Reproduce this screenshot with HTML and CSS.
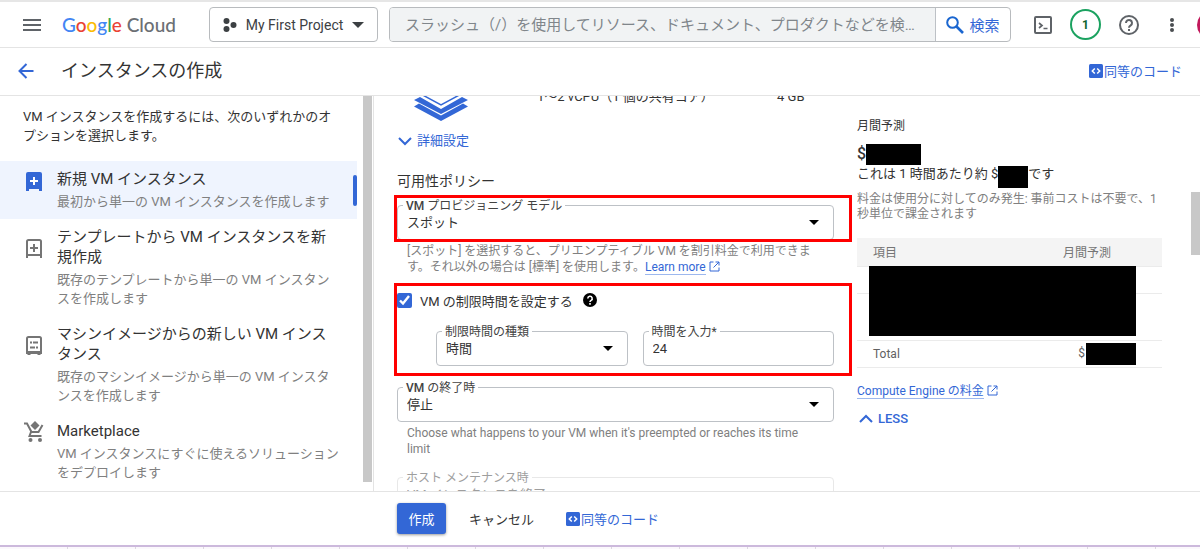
FILE: index.html
```html
<!DOCTYPE html>
<html lang="ja">
<head>
  <meta charset="UTF-8">
  <title>インスタンスの作成 – Google Cloud</title>
  <link rel="stylesheet" href="styles.css">
</head>
<body>
  <header class="topbar">
    <button class="icon-btn menu-btn" type="button" aria-label="メニュー">
      <svg width="18" height="12" viewBox="0 0 18 12"><path d="M0 0h18v2H0zM0 5h18v2H0zM0 10h18v2H0z" fill="#5f6368"/></svg>
    </button>
    <a class="logo" href="#"><span class="g-blue">G</span><span class="g-red">o</span><span class="g-yellow">o</span><span class="g-blue">g</span><span class="g-green">l</span><span class="g-red">e</span> Cloud</a>
    <button class="project-btn" type="button">
      <svg width="14" height="14" viewBox="0 0 14 14" fill="#3c4043"><circle cx="3.5" cy="3" r="3"/><circle cx="3.5" cy="11" r="3"/><circle cx="10.5" cy="7" r="3"/></svg>
      <span>My First Project</span>
      <svg width="12" height="6" viewBox="0 0 12 6"><path d="M0 0h12L6 6z" fill="#3c4043"/></svg>
    </button>
    <form class="search">
      <input type="text" aria-label="検索" placeholder="スラッシュ（/）を使用してリソース、ドキュメント、プロダクトなどを検…">
      <button type="button">
        <svg width="18" height="18" viewBox="0 0 18 18" fill="none" stroke="#1a66d0" stroke-width="2"><circle cx="6.500" cy="6.500" r="5.300"/><path d="M10.500 10.500l6.500 6.500" stroke-width="2.600"/></svg>
        検索
      </button>
    </form>
    <div class="tools">
      <button class="icon-btn" type="button" aria-label="Cloud Shell">
        <svg width="18" height="18" viewBox="0 0 18 18" fill="none" stroke="#5f6368" stroke-width="2"><rect x="1" y="1" width="16" height="16" rx="1"/><path d="M5 7l3 2.500L5 12M9.500 12.500h4" stroke-width="1.700"/></svg>
      </button>
      <button class="icon-btn notice" type="button">1</button>
      <button class="icon-btn" type="button" aria-label="ヘルプ">
        <svg width="20" height="20" viewBox="0 0 20 20" fill="none" stroke="#5f6368" stroke-width="2"><circle cx="10" cy="10" r="9"/><path d="M7 8a3 3 0 1 1 4.700 2.400c-1 .700-1.700 1.200-1.700 2.400M10 14v2"/></svg>
      </button>
      <button class="icon-btn" type="button" aria-label="その他">
        <svg width="4" height="14" viewBox="0 0 4 14" fill="#4a4d51"><circle cx="2" cy="2" r="2"/><circle cx="2" cy="7" r="2"/><circle cx="2" cy="12" r="2"/></svg>
      </button>
      <span class="avatar"></span>
    </div>
  </header>

  <div class="titlebar">
    <a class="back" href="#" aria-label="戻る">
      <svg width="16" height="16" viewBox="0 0 16 16" fill="none" stroke="#3367d6" stroke-width="2"><path d="M15.500 8H2M8.500 1L1.500 8l7 7"/></svg>
    </a>
    <h1>インスタンスの作成</h1>
    <a class="code-link" href="#">
      <svg width="14" height="14" viewBox="0 0 14 14"><rect width="14" height="14" rx="1.500" fill="#3367d6"/><path d="M5.800 4.500L3.300 7l2.500 2.500M8.200 4.500L10.700 7 8.200 9.500" fill="none" stroke="#fff" stroke-width="1.500"/></svg>同等のコード
    </a>
  </div>

  <main class="content">
    <nav class="sidebar">
      <p class="intro">VM インスタンスを作成するには、次のいずれかのオ<br>プションを選択します。</p>
      <a class="option selected" href="#">
        <svg width="16" height="19" viewBox="0 0 16 19"><path d="M2 0h12a2 2 0 0 1 2 2v17h-3v-2H3v2H0V2a2 2 0 0 1 2-2z" fill="#3367d6"/><path d="M8 5v8M4 9h8" stroke="#fff" stroke-width="2"/></svg>
        <span class="option-text">
          <span class="option-title">新規 VM インスタンス</span>
          <span class="option-desc">最初から単一の VM インスタンスを作成します</span>
        </span>
      </a>
      <a class="option" href="#">
        <svg width="16" height="19" viewBox="0 0 16 19" fill="none" stroke="#757575" stroke-width="2"><path d="M1 19V2.500Q1 1 2.500 1h11Q15 1 15 2.500V19M1 16h14M8 5v8M4 9h8"/></svg>
        <span class="option-text">
          <span class="option-title">テンプレートから VM インスタンスを新<br>規作成</span>
          <span class="option-desc">既存のテンプレートから単一の VM インスタン<br>スを作成します</span>
        </span>
      </a>
      <a class="option" href="#">
        <svg width="16" height="19" viewBox="0 0 16 19" fill="none" stroke="#757575" stroke-width="2"><path d="M1 16V2.500Q1 1 2.500 1h11Q15 1 15 2.500V16"/><path d="M0 16.500h16" stroke-width="3"/><path d="M1.500 18.500h3M11.500 18.500h3" stroke-width="1"/><path d="M4 6.500h2M7 6.500h5M4 11.500h5M10 11.500h2"/></svg>
        <span class="option-text">
          <span class="option-title">マシンイメージからの新しい VM インス<br>タンス</span>
          <span class="option-desc">既存のマシンイメージから単一の VM インスタ<br>ンスを作成します</span>
        </span>
      </a>
      <a class="option market" href="#">
        <svg width="20" height="21" viewBox="0 0 20 21" fill="#757575"><path d="M11 0l4.500 4.500L11 9 6.500 4.500z"/><path d="M0 2.500h3l4.500 8.500h7L18.500 4M7 11l-1.500 4h12" fill="none" stroke="#757575" stroke-width="2"/><circle cx="6.500" cy="19" r="2"/><circle cx="16" cy="19" r="2"/></svg>
        <span class="option-text">
          <span class="option-title">Marketplace</span>
          <span class="option-desc">VM インスタンスにすぐに使えるソリューション<br>をデプロイします</span>
        </span>
      </a>
    </nav>

    <form class="config">
      <div class="machine">
        <svg width="54" height="34" viewBox="0 0 54 34" fill="#3367d6"><path d="M5 6l22 12L49 6" fill="none" stroke="#3367d6" stroke-width="1.500"/><path d="M0 13l6-3 21 12 21-12 6 3-27 14z"/><path d="M0 19.500l5-3 22 12 22-12 5 3L27 34z"/></svg>
        <span class="vcpu">1～2 vCPU（1 個の共有コア）</span>
        <span>4 GB</span>
      </div>
      <button class="text-btn details" type="button">
        <svg width="14" height="9" viewBox="0 0 14 9" fill="none" stroke="#3367d6" stroke-width="2"><path d="M1 1l6 6 6-6"/></svg>
        詳細設定
      </button>

      <h2>可用性ポリシー</h2>
      <div class="marked marked-model">
        <div class="field">
          <label for="model"><b>VM</b> プロビジョニング モデル</label>
          <select id="model"><option>スポット</option></select>
        </div>
      </div>
      <p class="hint">[スポット] を選択すると、プリエンプティブル VM を割引料金で利用できま<br>す。それ以外の場合は [標準] を使用します。<a class="ext" href="#">Learn more</a> <svg class="ext-icon" width="11" height="11" viewBox="0 0 11 11"><path d="M4.500 1H1v9h9V6.500M6.500 1H10v3.500M10 1L4.500 6.500"/></svg></p>

      <div class="marked marked-limit">
        <div class="check-row">
          <input type="checkbox" id="limit" checked>
          <label for="limit">VM の制限時間を設定する</label>
          <svg width="14" height="14" viewBox="0 0 14 14"><circle cx="7" cy="7" r="7"/><path d="M4.800 5.500a2.200 2.200 0 1 1 3.300 1.900Q7 8 7 9M7 10v1.800" fill="none" stroke="#fff" stroke-width="1.600"/></svg>
        </div>
        <div class="pair">
          <div class="field">
            <label for="kind">制限時間の種類</label>
            <select id="kind"><option>時間</option></select>
          </div>
          <div class="field">
            <label for="hours">時間を入力*</label>
            <input type="text" id="hours" value="24">
          </div>
        </div>
      </div>

      <div class="field">
        <label for="end"><b>VM</b> の終了時</label>
        <select id="end"><option>停止</option></select>
      </div>
      <p class="hint">Choose what happens to your VM when it's preempted or reaches its time<br>limit</p>
      <div class="field disabled">
        <label for="host">ホスト メンテナンス時</label>
        <select id="host" disabled><option>VM インスタンスを終了</option></select>
      </div>
    </form>

    <aside class="estimate">
      <h3>月間予測</h3>
      <p class="price">$<span class="redacted"></span></p>
      <p class="hourly">これは 1 時間あたり約 $<span class="redacted"></span>です</p>
      <p class="note">料金は使用分に対してのみ発生: 事前コストは不要で、1<br>秒単位で課金されます</p>
      <div class="costs">
        <table>
          <thead>
            <tr><th>項目</th><th>月間予測</th></tr>
          </thead>
          <tbody>
            <tr><td></td><td></td></tr>
            <tr class="tall"><td></td><td></td></tr>
            <tr><td>Total</td><td class="sum">$<span class="redacted"></span></td></tr>
          </tbody>
        </table>
        <div class="cover"></div>
      </div>
      <p class="pricing"><a class="ext" href="#">Compute Engine の料金</a> <svg class="ext-icon" width="11" height="11" viewBox="0 0 11 11"><path d="M4.500 1H1v9h9V6.500M6.500 1H10v3.500M10 1L4.500 6.500"/></svg></p>
      <button class="text-btn less" type="button">
        <svg width="14" height="9" viewBox="0 0 14 9" fill="none" stroke="#3367d6" stroke-width="2"><path d="M1 8l6-6 6 6"/></svg>
        LESS
      </button>
    </aside>
  </main>

  <footer class="actions">
    <button class="primary" type="button">作成</button>
    <button class="cancel" type="button">キャンセル</button>
    <a class="code-link" href="#">
      <svg width="14" height="14" viewBox="0 0 14 14"><rect width="14" height="14" rx="1.500" fill="#3367d6"/><path d="M5.800 4.500L3.300 7l2.500 2.500M8.200 4.500L10.700 7 8.200 9.500" fill="none" stroke="#fff" stroke-width="1.500"/></svg>同等のコード
    </a>
  </footer>
  <div class="strip"></div>
</body>
</html>
```
FILE: styles.css
```css
* {
  box-sizing: border-box;
}

body {
  margin: 0;
  height: 100vh;
  display: flex;
  flex-direction: column;
  overflow: hidden;
  font-family: Roboto, "Noto Sans CJK JP", sans-serif;
  font-size: 13px;
  color: #333;
  background-color: #fff;
}

h1, h2, h3, p {
  margin: 0;
  font-weight: 400;
}

a {
  color: #3367d6;
  text-decoration: none;
}

button, input, select {
  font: inherit;
  color: inherit;
}

button {
  padding: 0;
  border: none;
  background: none;
  cursor: pointer;
}

svg {
  flex: none;
}

/* Header */
.topbar {
  flex: none;
  display: flex;
  align-items: center;
  height: 48px;
  padding-left: 23px;
  border-top: 2px solid #e6e6e6;
  border-bottom: 1px solid #e4e4e4;
}

.icon-btn {
  display: flex;
  align-items: center;
  justify-content: center;
}

.logo {
  width: 126px;
  margin: 0 21px;
  font-family: Lato, sans-serif;
  font-size: 19px;
  font-weight: 500;
  line-height: 24px;
  white-space: nowrap;
  color: #6b6f74;
}

.g-blue { color: #4285f4; }
.g-red { color: #ea4335; }
.g-yellow { color: #fbbc05; }
.g-green { color: #34a853; }

.project-btn {
  display: flex;
  align-items: center;
  width: 169px;
  height: 35px;
  padding: 0 13px;
  border: 1px solid #b8bbbe;
  border-radius: 4px;
  font-size: 14px;
  color: #3c4043;
}

.project-btn span {
  flex: 1;
  text-align: center;
}

.search {
  flex: 1;
  display: flex;
  height: 35px;
  margin: 0 23px 0 11px;
  border: 1px solid #b8bbbe;
  border-radius: 4px;
  overflow: hidden;
}

.search input {
  flex: 1;
  min-width: 0;
  padding: 0 15px;
  border: none;
  background-color: #f1f3f4;
  font-size: 15px;
}

.search input::placeholder {
  color: #80868b;
}

.search button {
  display: flex;
  align-items: center;
  justify-content: center;
  gap: 5px;
  width: 75px;
  border-left: 1px solid #bdc1c6;
  font-size: 15px;
  color: #3367d6;
}

.tools {
  flex: none;
  display: flex;
  align-items: center;
  width: 166px;
  gap: 18px;
  overflow: hidden;
}

.tools .icon-btn,
.avatar {
  flex: none;
}

.tools .icon-btn:nth-child(4) {
  margin-left: 13px;
}

.notice {
  width: 31px;
  height: 31px;
  border: 2px solid #1ba260;
  border-radius: 50%;
  font-size: 12px;
  font-weight: 700;
  color: #0d652d;
}

.avatar {
  margin-left: 5px;
  width: 28px;
  height: 28px;
  border-radius: 50%;
  background-color: #c2185b;
}

/* Page title */
.titlebar {
  flex: none;
  display: flex;
  align-items: center;
  height: 48px;
  padding: 0 18px 2px;
  border-bottom: 1px solid #e4e4e4;
}

.back {
  display: flex;
}

h1 {
  flex: 1;
  margin-left: 27px;
  font-size: 18px;
  line-height: 24px;
}

.code-link {
  display: flex;
  align-items: center;
  gap: 1px;
}

/* Three panes */
.content {
  flex: 1;
  min-height: 0;
  display: grid;
  grid-template-columns: 374px minmax(0, 1fr) 343px;
}

.sidebar,
.config,
.estimate {
  min-height: 0;
  overflow: hidden;
  position: relative;
}

.sidebar {
  padding-right: 16px;
  border-right: 1px solid #e4e4e4;
}

.sidebar::after {
  content: "";
  position: absolute;
  top: 0;
  right: 1px;
  bottom: 9px;
  width: 9px;
  background-color: #c8c8c8;
}

.intro {
  padding: 11px 0 0 23px;
  margin-bottom: 16px;
  line-height: 19px;
  white-space: nowrap;
}

.option {
  display: flex;
  gap: 15px;
  padding: 8px 0 8px 26px;
  position: relative;
  color: #333;
  white-space: nowrap;
}

.option > svg {
  margin-top: 3px;
}

.option + .option > svg {
  margin-top: 12px;
}

.option.selected {
  background-color: #eff4fe;
}

.option.selected::after {
  content: "";
  position: absolute;
  top: 14px;
  right: 0;
  bottom: 13px;
  width: 4px;
  border-radius: 2px;
  background-color: #3367d6;
}

.option.market {
  gap: 13px;
  padding-left: 24px;
}

.option + .option.market > svg {
  margin-top: 0;
}

.option-title,
.option-desc {
  display: block;
}

.option-title {
  font-size: 15px;
  line-height: 20px;
}

.option-desc {
  margin-top: 3px;
  line-height: 19px;
  color: #808080;
}

/* Form */
.config {
  padding: 0 23px;
}

.machine {
  display: flex;
  height: 34px;
  margin-top: -9px;
  padding-left: 17px;
  line-height: 20px;
}

.vcpu {
  width: 240px;
  margin-left: 69px;
}

.text-btn {
  display: flex;
  align-items: center;
  gap: 5px;
  line-height: 20px;
  color: #3367d6;
}

.details {
  margin-top: 10px;
  margin-left: 1px;
}

h2 {
  margin: 20px 0 14px;
  font-size: 14px;
  line-height: 20px;
}

.field {
  position: relative;
}

.field label {
  position: absolute;
  top: -8px;
  left: 6px;
  padding: 0 3px;
  background-color: #fff;
  font-size: 12px;
  line-height: 18px;
  color: #424242;
}

.field label b {
  font-weight: 500;
}

.field select,
.field input {
  appearance: none;
  display: block;
  width: 100%;
  height: 35px;
  padding: 0 9px;
  border: 1px solid #bdc1c6;
  border-radius: 4px;
  background-color: #fff;
}

.field:has(select)::after {
  content: "";
  position: absolute;
  top: 15px;
  right: 15px;
  border: 5px solid transparent;
  border-top-color: #000;
  border-bottom: none;
}

.field.disabled select {
  border-color: #e8e8e8;
  color: #9e9e9e;
  opacity: 1;
}

.field.disabled label {
  color: #9e9e9e;
}

.field.disabled::after {
  display: none;
}

.hint {
  margin: 3px 0 17px;
  padding-left: 10px;
  font-size: 12px;
  line-height: 16px;
  white-space: nowrap;
  color: #808080;
}

.field + .hint {
  margin-bottom: 20px;
}

.ext {
  border-bottom: 1px solid #9db8ee;
}

.ext-icon {
  vertical-align: -1px;
  fill: none;
  stroke: #3367d6;
}

/* Red frames round the settings to change */
.marked {
  position: relative;
}

.marked::after {
  content: "";
  position: absolute;
  border: 3px solid #f00;
  pointer-events: none;
}

.marked-model::after {
  inset: -10px -18px -2px -3px;
}

.marked-limit {
  margin-bottom: 21px;
}

.marked-limit::after {
  inset: -9px -18px -10px -3px;
}

.check-row {
  display: flex;
  align-items: center;
  height: 16px;
  margin-bottom: 23px;
}

.check-row input {
  width: 15px;
  height: 15px;
  margin: 0 8px 0 0;
  accent-color: #3367d6;
}

.check-row svg {
  margin-left: 10px;
}

.pair {
  display: grid;
  grid-template-columns: 1fr 1fr;
  gap: 15px;
  margin-left: 39px;
}

/* Price estimate */
.estimate {
  padding: 21px 38px 0 0;
}

.estimate::after {
  content: "";
  position: absolute;
  top: 96px;
  right: 0;
  width: 9px;
  height: 63px;
  background-color: #c8c8c8;
}

.redacted {
  display: inline-block;
  background-color: #000;
}

h3 {
  font-size: 12px;
  line-height: 18px;
}

.price,
.hourly {
  display: flex;
  white-space: pre;
}

.price {
  height: 21px;
  margin-top: 9px;
  font-size: 16px;
  font-weight: 500;
  line-height: 20px;
}

.price .redacted {
  width: 55px;
  height: 21px;
}

.hourly {
  height: 23px;
  line-height: 18px;
}

.hourly .redacted {
  width: 30px;
  height: 22px;
  margin-top: 1px;
}

.note {
  margin: 4px 0 16px;
  font-size: 12px;
  line-height: 15px;
  white-space: nowrap;
  color: #808080;
}

.costs {
  position: relative;
}

table {
  width: 100%;
  border-collapse: collapse;
  table-layout: fixed;
  font-size: 12px;
}

th, td {
  height: 27px;
  padding: 0 0 0 16px;
  border-bottom: 1px solid #ebebeb;
  text-align: left;
  color: #616161;
}

th {
  height: 28px;
  font-weight: 400;
  background-color: #f4f4f4;
  color: #757575;
}

th:last-child {
  width: 115px;
}

.tall td {
  height: 47px;
}

td.sum {
  padding: 0 26px 0 0;
  text-align: right;
}

.sum .redacted {
  width: 50px;
  height: 22px;
  margin-left: 1px;
  vertical-align: middle;
}

.cover {
  position: absolute;
  top: 28px;
  left: 12px;
  right: 26px;
  height: 70px;
  background-color: #000;
}

.pricing {
  margin-top: 15px;
  font-size: 12px;
  line-height: 16px;
}

.less {
  margin: 10px 0 0 2px;
  font-weight: 500;
}

/* Bottom bar */
.actions {
  flex: none;
  display: flex;
  align-items: center;
  height: 54px;
  padding-left: 397px;
  border-top: 1px solid #e4e4e4;
}

.primary {
  width: 49px;
  height: 31px;
  border-radius: 3px;
  background-color: #3367d6;
  box-shadow: 0 1px 3px rgba(0, 0, 0, 0.4);
  color: #fff;
}

.cancel {
  margin: 0 32px 0 23px;
}

.strip {
  flex: none;
  height: 4px;
  border-top: 2px solid #ccb9dc;
  background: repeating-linear-gradient(to right, #fbf8fc 0 67px, #dcd6e0 67px 68px);
}
```
